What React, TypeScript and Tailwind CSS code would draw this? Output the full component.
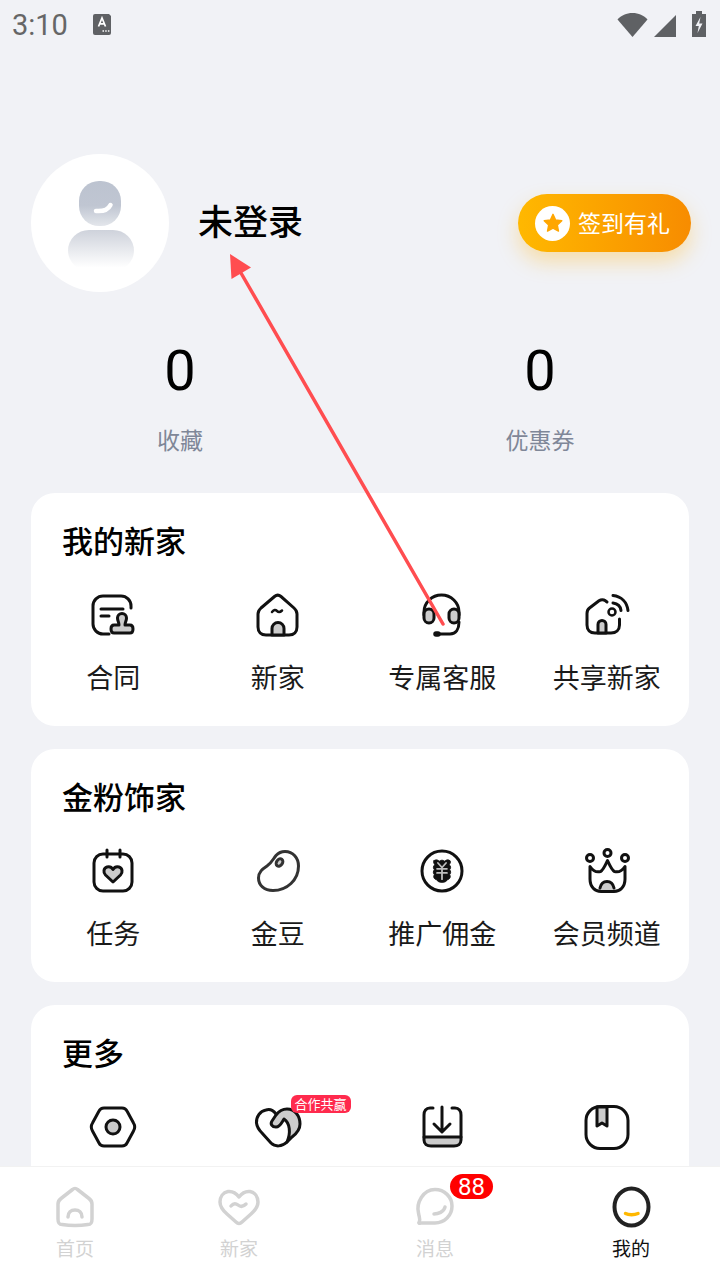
import type { ReactNode } from 'react';

const INK = '#111111';
const FILL = '#cccccc';
const TAB = '#d2d2d2';

function Glyph({ children }: { children: ReactNode }) {
  return (
    <svg
      viewBox="0 0 48 48"
      className="h-12 w-12"
      fill="none"
      stroke={INK}
      strokeWidth="3"
      strokeLinecap="round"
      strokeLinejoin="round"
    >
      {children}
    </svg>
  );
}

const ContractIcon = () => (
  <Glyph>
    <path d="M42 17V15A10 10 0 0 0 32 5H14A10 10 0 0 0 4 15V33A10 10 0 0 0 14 43H20" />
    <path d="M12 18H34M12 25H20" />
    <path
      d="M30 34C30 31 28.500 30 28.500 27A4.500 4.500 0 0 1 37.500 27C37.500 30 36 31 36 34H41C43 34 44 36 44 38C44 40 43 42 41 42H25C23 42 22 40 22 38C22 36 23 34 25 34Z"
      fill={FILL}
    />
  </Glyph>
);

const NewHomeIcon = () => (
  <Glyph>
    <path d="M20.500 5.500C22.500 3.800 25 3.800 27 5.500L40 17C42 18.800 43 20.500 43 23V36C43 41 40 44 35 44H12C7 44 4 41 4 36V23C4 20.500 5 18.800 7 17Z" />
    <path d="M18 21C20 18.500 21.500 18.500 23 20C24.500 21.500 26 21.500 28 19.500" strokeWidth="2.500" />
    <path d="M18 44V37.500A6 6 0 0 1 30 37.500V44Z" fill={FILL} />
  </Glyph>
);

const HeadsetIcon = () => (
  <Glyph>
    <path d="M6 24V21A17.500 17 0 0 1 41 21V24" />
    <rect x="6" y="18" width="10" height="14" rx="5" fill={FILL} />
    <rect x="31" y="18" width="10" height="14" rx="5" fill={FILL} />
    <path d="M41 31C41 38 38 43 32 43H20" />
    <path d="M18 43H20" strokeWidth="5.500" />
  </Glyph>
);

const ShareHomeIcon = () => (
  <Glyph>
    <path d="M24 11L22.500 9.800C20.500 8.400 18 8.400 16 9.800L6.500 17C4.500 18.500 4 20 4 22.500V34C4 39 7 42 12 42H28C33 42 36.500 39 36.500 34V28" />
    <path d="M15 42V33.500A4 4 0 0 1 23 33.500V42Z" fill={FILL} />
    <circle cx="29" cy="21" r="3.500" strokeWidth="2.500" />
    <path d="M30 12C34.500 12.500 37.500 15 38 19.500" />
    <path d="M30 4.500C38.500 5.500 44 11 45 19.500" />
  </Glyph>
);

const TaskIcon = () => (
  <Glyph>
    <rect x="5" y="7" width="38" height="37" rx="9" />
    <path d="M18 3V10M31 3V10" />
    <path
      d="M24 35L16.500 28C14 25.500 14.500 21 18 20C20.500 19.300 22.800 20.500 24 22.500C25.200 20.500 27.500 19.300 30 20C33.500 21 34 25.500 31.500 28Z"
      fill={FILL}
    />
  </Glyph>
);

const BeanIcon = () => (
  <Glyph>
    <g stroke="#333333">
      <path d="M31 4.500C39 4.500 44.500 11 44.500 19C44.500 33 33 43.500 19 43.500C10 43.500 4.500 38 4.500 31C4.500 25 8.500 22 13 19C18 15.500 19 12 22 8.500C24.500 5.800 27 4.500 31 4.500Z" />
      <ellipse cx="25.500" cy="15.500" rx="3" ry="4" transform="rotate(35 25.500 15.500)" fill={FILL} />
    </g>
  </Glyph>
);

const CommissionIcon = () => (
  <Glyph>
    <circle cx="24" cy="24" r="20" />
    <g transform="translate(2.400 2.500) scale(0.9)">
      <path
        d="M15 12.500C17.500 10.500 20 12 21 13C23 11.500 25 11.500 27 13C28 12 30.500 10.500 33 12.500C34 14.500 32.500 16 32 17C34 18.500 34 21 32.500 22.500C34 24 34 26.500 32.500 28C34 30 33 33 30 33.500C29 35.500 27 36.500 24 36.500C21 36.500 19 35.500 18 33.500C15 33 14 30 15.500 28C14 26.500 14 24 15.500 22.500C14 21 14 18.500 16 17C15.500 16 14 14.500 15 12.500Z"
        fill={INK}
        strokeWidth="1"
      />
      <path d="M19.500 15L24 20L28.500 15M18.500 21.500H29.500M18.500 26H29.500M24 20V33" stroke="#bdbdbd" strokeWidth="2" />
    </g>
  </Glyph>
);

const CrownIcon = () => (
  <Glyph>
    <path d="M17 40C18 36 20.500 34.500 24 34.500C27.500 34.500 30 36 31 40L32 44.500H16Z" fill={FILL} stroke="none" />
    <path d="M7 19.500C10 24 14 25.500 17.500 24.500C20 23.500 22 19 24.500 13.500C27 19 29 23.500 31.500 24.500C35 25.500 39 24 42 19.500V32C42 40 37 44.500 31 44.500H18C12 44.500 7 40 7 32Z" />
    <path d="M17 41C18 36.500 20.500 34.500 24 34.500C27.500 34.500 30 36.500 31 41" />
    <circle cx="7" cy="11" r="3.500" />
    <circle cx="24.500" cy="6" r="3.500" />
    <circle cx="42" cy="11" r="3.500" />
  </Glyph>
);

const NutIcon = () => (
  <Glyph>
    <path d="M15 5H33C35.500 5 37 6 38 8L44.500 20C46 22.500 46 25.500 44.500 28L38 40C37 42 35.500 43 33 43H15C12.500 43 11 42 10 40L3.500 28C2 25.500 2 22.500 3.500 20L10 8C11 6 12.500 5 15 5Z" />
    <circle cx="24" cy="24" r="7" fill={FILL} />
  </Glyph>
);

const PartnerIcon = () => (
  <Glyph>
    <path
      d="M22 12C25 8 29 6 33 6C41 6 46 13 46 21C46 27 42 31 38 34L33 39C37 30 36 20 30 16C28 19 26 24 22 24C18 24 16 21 18 18Z"
      fill={FILL}
    />
    <path d="M22 11C19 7 15 6 12 7C6 8 2 14 2.500 20C3 24 5 27 8 30L17 40C21 44 28 44 33 39" />
  </Glyph>
);

const DownloadIcon = () => (
  <Glyph>
    <path d="M6 34H43V37C43 41 40 43 36 43H13C9 43 6 41 6 37Z" fill={FILL} />
    <path d="M15 5H12C8 5 6 8 6 12V34M34 5H37C41 5 43 8 43 12V34" />
    <path d="M24 4V28M16 21L24 29L32 21" />
  </Glyph>
);

const NotebookIcon = () => (
  <Glyph>
    <rect x="3" y="3.500" width="42" height="42" rx="14" />
    <path d="M14 4H24V23L19 20L14 23Z" fill={FILL} />
  </Glyph>
);

function TabGlyph({ children }: { children: ReactNode }) {
  return (
    <svg
      viewBox="0 0 48 48"
      className="h-12 w-12"
      fill="none"
      stroke={TAB}
      strokeWidth="3.500"
      strokeLinecap="round"
      strokeLinejoin="round"
    >
      {children}
    </svg>
  );
}

type GridItem = { label?: string; icon: ReactNode; tag?: string };

const homeItems: GridItem[] = [
  { label: '合同', icon: <ContractIcon /> },
  { label: '新家', icon: <NewHomeIcon /> },
  { label: '专属客服', icon: <HeadsetIcon /> },
  { label: '共享新家', icon: <ShareHomeIcon /> },
];

const fanItems: GridItem[] = [
  { label: '任务', icon: <TaskIcon /> },
  { label: '金豆', icon: <BeanIcon /> },
  { label: '推广佣金', icon: <CommissionIcon /> },
  { label: '会员频道', icon: <CrownIcon /> },
];

const moreItems: GridItem[] = [
  { icon: <NutIcon /> },
  { icon: <PartnerIcon />, tag: '合作共赢' },
  { icon: <DownloadIcon /> },
  { icon: <NotebookIcon /> },
];

function Section({ title, items }: { title: string; items: GridItem[] }) {
  return (
    <section className="h-[233px] shrink-0 rounded-[24px] bg-white pt-[29px]">
      <h2 className="pl-[31px] text-[31px] leading-9 font-medium text-black">{title}</h2>
      <div className="mt-[33px] grid grid-cols-4">
        {items.map((item, i) => (
          <div key={i} className="relative flex flex-col items-center">
            {item.icon}
            {item.tag && (
              <span className="absolute top-[-8px] left-[95px] flex h-[18px] w-[60px] items-center justify-center rounded-[6px] bg-[#ff2a4d] text-[13px] whitespace-nowrap text-white">
                {item.tag}
              </span>
            )}
            {item.label && <span className="mt-5 text-[27px] leading-9 text-[#1a1a1a]">{item.label}</span>}
          </div>
        ))}
      </div>
    </section>
  );
}

function StatusBar() {
  return (
    <div className="flex h-12 shrink-0 items-center pr-[14px] pl-3">
      <span className="mt-[2px] font-['Roboto',sans-serif] text-[29px] leading-none text-[#666666]">3:10</span>
      <svg viewBox="0 0 18 21" className="ml-[25px] h-[21px] w-[18px]">
        <path d="M2 0H16L18 2V19Q18 21 16 21H2Q0 21 0 19V2Q0 0 2 0Z" fill="#5f6164" />
        <path d="M5.500 12.500L9 4L12.500 12.500M6.800 9.800H11.200" stroke="#fff" strokeWidth="1.700" fill="none" />
        <path d="M9.500 17H11M12.200 17H13.700M14.900 17H16.400" stroke="#fff" strokeWidth="1.500" />
      </svg>
      <div className="ml-auto flex items-end">
        <svg viewBox="0 0 31 24" className="h-6 w-[31px]">
          <path d="M15.500 24L0.500 6.500C4 2.500 9.500 0 15.500 0C21.500 0 27 2.500 30.500 6.500Z" fill="#5f6164" />
        </svg>
        <svg viewBox="0 0 22 22" className="ml-[6px] h-[22px] w-[22px]">
          <path d="M22 0V22H0Z" fill="#5f6164" />
        </svg>
        <svg viewBox="0 0 14 26" className="ml-4 h-[26px] w-[14px]">
          <path d="M4 0H10V3H14V26H0V3H4Z" fill="#5f6164" />
          <path d="M8.500 6L3.500 15H6.800L5.500 22L10.500 12.500H7.200Z" fill="#f1f2f6" />
        </svg>
      </div>
    </div>
  );
}

function Avatar() {
  return (
    <svg viewBox="0 0 138 138" className="h-[138px] w-[138px] shrink-0">
      <defs>
        <linearGradient id="head" x1="0" y1="0" x2="0" y2="1">
          <stop offset="0" stopColor="#bcc3d0" />
          <stop offset="0.55" stopColor="#c0c6d2" />
          <stop offset="1" stopColor="#e3e6eb" />
        </linearGradient>
        <linearGradient id="body" x1="0" y1="0" x2="0" y2="1">
          <stop offset="0" stopColor="#ced2db" />
          <stop offset="0.92" stopColor="#ffffff" />
        </linearGradient>
      </defs>
      <circle cx="69" cy="69" r="69" fill="#ffffff" />
      <rect x="48" y="27" width="42" height="45" rx="20" fill="url(#head)" />
      <path d="M65 57C71 57.500 77 56 79.500 51" stroke="#ffffff" strokeWidth="4.500" strokeLinecap="round" fill="none" />
      <rect x="37" y="76" width="66" height="41" rx="21" fill="url(#body)" />
    </svg>
  );
}

function SignInButton() {
  return (
    <button className="flex h-[58px] w-[173px] items-center rounded-full bg-gradient-to-r from-[#ffb800] to-[#f78c00] pl-[17px] shadow-[0_10px_20px_rgba(255,190,50,0.38)]">
      <span className="flex h-[35px] w-[35px] items-center justify-center rounded-full bg-white">
        <svg viewBox="0 0 24 24" className="h-[22px] w-[22px]">
          <path
            d="M12 2.500L14.900 8.700L21.600 9.500L16.700 14.100L18 20.800L12 17.500L6 20.800L7.300 14.100L2.400 9.500L9.100 8.700Z"
            fill="#ffa600"
            stroke="#ffa600"
            strokeWidth="1.500"
            strokeLinejoin="round"
          />
        </svg>
      </span>
      <span className="mb-[2px] ml-2 text-[23px] leading-none text-white">签到有礼</span>
    </button>
  );
}

function Stat({ value, label }: { value: string; label: string }) {
  return (
    <div className="flex flex-col items-center">
      <span className="font-['Roboto',sans-serif] text-[56px] leading-[64px] text-black">{value}</span>
      <span className="mt-[21px] text-[23px] leading-[30px] text-[#7f8798]">{label}</span>
    </div>
  );
}

const tabs: { label: string; active?: boolean; badge?: string; icon: ReactNode }[] = [
  {
    label: '首页',
    icon: (
      <TabGlyph>
        <path d="M21.500 6.500C23 5 25 5 26.500 6.500L38 15.500C40 17 41 18.500 41 21V36C41 40 40 41.500 37 41.500C28 43 20 43 11 41.500C8 41.500 7 40 7 36V21C7 18.500 8 17 10 15.500Z" />
        <path d="M17 34C17 29.500 20 27 24 27C28 27 31 29.500 31 34" />
      </TabGlyph>
    ),
  },
  {
    label: '新家',
    icon: (
      <TabGlyph>
        <path d="M24 14C21 10 17 8 13 8.500C8 9.500 5 14 5 19C5 24 8 27.500 12 31L21 39C23 41 25 41 27 39L36 31C40 27.500 43 24 43 19C43 14 40 9.500 35 8.500C31 8 27 10 24 14Z" />
        <path d="M16 23C18.500 20 20.500 20 23 22C25.500 24 28 24 31 21" />
      </TabGlyph>
    ),
  },
  {
    label: '消息',
    badge: '88',
    icon: (
      <TabGlyph>
        <path d="M8 39.500C10 36 8 34.500 7.500 30C5 20 12 6.500 24 6.500C33.500 6.500 41 14 41 23C41 32.500 33.500 40 24 40H9.500C8 40.500 7.500 40 8 39.500Z" />
        <path d="M23 31C27 31 33 29 34 24" />
      </TabGlyph>
    ),
  },
  {
    label: '我的',
    active: true,
    icon: (
      <svg viewBox="0 0 48 48" className="h-12 w-12" fill="none" strokeLinecap="round">
        <ellipse cx="24.500" cy="24" rx="17" ry="18.500" stroke="#222222" strokeWidth="4" />
        <path d="M18.500 30.500C21.500 32 27.500 32 31 30.500" stroke="#ffb800" strokeWidth="3.500" />
      </svg>
    ),
  },
];

function TabBar() {
  return (
    <nav className="grid h-[114px] shrink-0 grid-cols-[150px_178px_214px_178px] border-t border-[#f2f2f2] bg-white pt-4">
      {tabs.map(tab => (
        <div key={tab.label} className="relative flex flex-col items-center">
          {tab.icon}
          {tab.badge && (
            <span className="absolute top-[-9px] left-[122px] flex h-[25px] w-[43px] items-center justify-center rounded-full bg-[#ff0000] font-['Roboto',sans-serif] text-[24px] leading-none text-white">
              {tab.badge}
            </span>
          )}
          <span className={`mt-[3px] text-[19px] leading-7 ${tab.active ? 'text-[#111111]' : 'text-[#d2d2d2]'}`}>
            {tab.label}
          </span>
        </div>
      ))}
    </nav>
  );
}

export default function App() {
  return (
    <div className="relative flex h-[1280px] w-[720px] flex-col overflow-hidden bg-[#f1f2f6] font-['Noto_Sans_CJK_SC','Noto_Sans',sans-serif]">
      <StatusBar />
      <main className="min-h-0 flex-1 overflow-hidden">
        {/* Profile */}
        <div className="mt-[106px] flex items-center pr-[29px] pl-[31px]">
          <Avatar />
          <h1 className="mb-[7px] ml-[29px] text-[35px] leading-none font-medium text-black">未登录</h1>
          <div className="ml-auto">
            <SignInButton />
          </div>
        </div>

        {/* Stats */}
        <div className="mt-[47px] grid grid-cols-2">
          <Stat value="0" label="收藏" />
          <Stat value="0" label="优惠券" />
        </div>

        {/* Cards */}
        <div className="mt-[39px] flex flex-col gap-[23px] px-[31px]">
          <Section title="我的新家" items={homeItems} />
          <Section title="金粉饰家" items={fanItems} />
          <Section title="更多" items={moreItems} />
        </div>
      </main>
      <TabBar />

      {/* Annotation arrow drawn over the page */}
      <svg viewBox="0 0 720 1280" className="pointer-events-none absolute inset-0 h-[1280px] w-[720px]">
        <path d="M241 273L443 624" stroke="#ff4d50" strokeWidth="3.500" strokeLinecap="round" />
        <path d="M230 254L251 267.500L231.500 279Z" fill="#ff4d50" />
      </svg>
    </div>
  );
}
